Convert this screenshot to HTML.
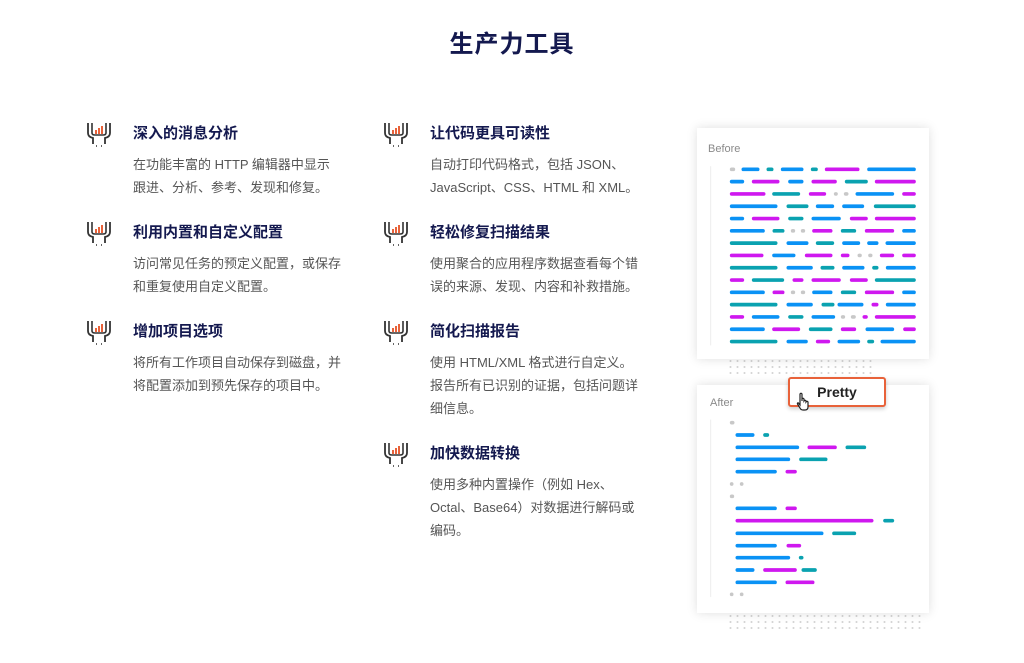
<!DOCTYPE html>
<html><head><meta charset="utf-8"><style>
*{margin:0;padding:0;box-sizing:border-box}
body{width:1024px;height:663px;background:#fff;position:relative;overflow:hidden;font-family:"Liberation Sans","Noto Sans CJK SC",sans-serif}
h1{position:absolute;top:24px;left:0;width:1024px;text-align:center;font-size:24px;font-weight:bold;color:#14194f;letter-spacing:1px}
.it{position:absolute;width:240px}
.it h3{font-size:15px;font-weight:bold;color:#14194f;line-height:20px;margin-bottom:9px}
.it p{font-size:13px;color:#555;line-height:23px}
.ic{position:absolute;width:28px;height:28px}
.card{position:absolute;background:#fff;box-shadow:0 0 10px rgba(0,0,0,.13)}
.lbl{position:absolute;font-size:11px;color:#8a8a8a}
.dots{position:absolute;background-image:radial-gradient(circle,#d6d6d6 0.8px,transparent 1.2px);background-size:7px 6px}
.btn{position:absolute;left:788px;top:377px;width:98px;height:30px;border:2px solid #e8623a;border-radius:3px;background:#fff;font-weight:bold;font-size:14px;color:#222;text-align:center;line-height:26px;box-shadow:0 2px 4px rgba(0,0,0,.2)}
</style></head><body>
<h1>生产力工具</h1>

<svg width="0" height="0" style="position:absolute"><defs>
<g id="icon"><path d="M3 3 L3 13 Q3 17 8 18 L8 24 M25 3 L25 13 Q25 17 20 18 L20 24" fill="none" stroke="#333" stroke-width="1.8"/>
<path d="M7 3 L7 13 Q7 15 10 15 L18 15 Q21 15 21 13 L21 3" fill="none" stroke="#333" stroke-width="1.6"/>
<rect x="10" y="10" width="2" height="4" fill="#e8623a"/><rect x="13" y="8" width="2" height="6" fill="#e8623a"/><rect x="16" y="6" width="2" height="8" fill="#e8623a"/>
<path d="M11 26h1M16 26h1" stroke="#333" stroke-width="1.6"/></g></defs></svg>

<svg class="ic" style="left:85px;top:120px" viewBox="0 0 28 28"><use href="#icon"/></svg>
<svg class="ic" style="left:85px;top:219px" viewBox="0 0 28 28"><use href="#icon"/></svg>
<svg class="ic" style="left:85px;top:318px" viewBox="0 0 28 28"><use href="#icon"/></svg>
<svg class="ic" style="left:382px;top:120px" viewBox="0 0 28 28"><use href="#icon"/></svg>
<svg class="ic" style="left:382px;top:219px" viewBox="0 0 28 28"><use href="#icon"/></svg>
<svg class="ic" style="left:382px;top:318px" viewBox="0 0 28 28"><use href="#icon"/></svg>
<svg class="ic" style="left:382px;top:440px" viewBox="0 0 28 28"><use href="#icon"/></svg>

<div class="it" style="left:133px;top:124px"><h3>深入的消息分析</h3><p>在功能丰富的 HTTP 编辑器中显示<br>跟进、分析、参考、发现和修复。</p></div>
<div class="it" style="left:133px;top:223px"><h3>利用内置和自定义配置</h3><p>访问常见任务的预定义配置，或保存<br>和重复使用自定义配置。</p></div>
<div class="it" style="left:133px;top:322px"><h3>增加项目选项</h3><p>将所有工作项目自动保存到磁盘，并<br>将配置添加到预先保存的项目中。</p></div>
<div class="it" style="left:430px;top:124px"><h3>让代码更具可读性</h3><p>自动打印代码格式，包括 JSON、<br>JavaScript、CSS、HTML 和 XML。</p></div>
<div class="it" style="left:430px;top:223px"><h3>轻松修复扫描结果</h3><p>使用聚合的应用程序数据查看每个错<br>误的来源、发现、内容和补救措施。</p></div>
<div class="it" style="left:430px;top:322px"><h3>简化扫描报告</h3><p>使用 HTML/XML 格式进行自定义。<br>报告所有已识别的证据，包括问题详<br>细信息。</p></div>
<div class="it" style="left:430px;top:444px"><h3>加快数据转换</h3><p>使用多种内置操作（例如 Hex、<br>Octal、Base64）对数据进行解码或<br>编码。</p></div>

<div class="dots" style="left:727px;top:358px;width:145px;height:16px"></div>
<div class="dots" style="left:727px;top:613px;width:195px;height:20px"></div>
<div class="card" style="left:697px;top:128px;width:232px;height:231px"></div>
<div class="card" style="left:697px;top:385px;width:232px;height:228px"></div>
<div class="lbl" style="left:708px;top:143px">Before</div>
<div class="lbl" style="left:710px;top:397px">After</div>

<svg style="position:absolute;left:690px;top:120px" width="250" height="520" viewBox="0 0 750 1560" fill="none" stroke-linecap="round" stroke-width="11" id="bars">
<line x1="62" y1="140" x2="62" y2="675" stroke="#eee" stroke-width="3"/>
<line x1="62" y1="900" x2="62" y2="1430" stroke="#eee" stroke-width="3"/>
</svg>
<div class="btn">Pretty</div>
<svg style="position:absolute;left:796px;top:392px" width="16" height="20" viewBox="0 0 16 20"><path d="M4 2 Q5 0.5 6 2 L6 9 L6 7 Q7 5.5 8 7 L8 9 Q9 7.5 10 9 L10 10 Q11 8.5 12 10 L12 15 Q12 18 9 18 L7 18 Q5 18 4 16 L1.5 12 Q1 10.5 2.5 11 L4 13 Z" fill="#fff" stroke="#222" stroke-width="1.2"/></svg>
<script>
var B='#0a92f5',T='#0aa2b0',M='#cf18ef',G='#c8c8c8';
var before=[
[[G,120,135],[B,155,208],[T,230,250],[B,273,340],[T,363,383],[M,405,508],[B,532,677]],
[[B,120,162],[M,186,268],[B,295,340],[M,365,440],[T,465,533],[M,555,677]],
[[M,120,226],[T,247,330],[M,357,408],[G,432,443],[G,462,475],[B,497,612],[M,637,677]],
[[B,120,262],[T,290,355],[B,378,432],[B,457,522],[T,552,677]],
[[B,120,162],[M,186,268],[T,295,340],[B,365,452],[M,480,533],[M,555,677]],
[[B,120,224],[T,248,283],[G,303,315],[G,333,345],[M,367,427],[T,453,498],[M,525,612],[B,637,677]],
[[T,120,262],[B,290,355],[T,378,432],[B,457,510],[B,532,565],[B,587,677]],
[[M,120,220],[B,247,316],[M,345,427],[M,453,478],[G,503,515],[G,535,547],[M,570,612],[M,637,677]],
[[T,120,262],[B,290,368],[T,392,433],[B,457,523],[T,547,565],[B,588,677]],
[[M,120,162],[T,186,282],[M,308,340],[M,365,452],[M,480,533],[T,555,677]],
[[B,120,224],[M,248,283],[G,303,315],[G,333,345],[B,367,427],[T,453,498],[M,525,612],[B,637,677]],
[[T,120,262],[B,290,368],[T,395,433],[B,443,520],[M,545,565],[B,588,677]],
[[M,120,162],[B,186,268],[T,295,340],[B,365,435],[G,453,465],[G,483,497],[M,518,533],[M,555,677]],
[[B,120,224],[M,247,330],[T,357,427],[M,453,498],[B,527,612],[M,640,677]],
[[T,120,262],[B,290,353],[M,378,420],[B,443,510],[T,532,552],[B,572,677]]];
var after=[[158,[[G,120,133]]],[195,[[B,137,193],[T,220,237]]],[232,[[B,137,327],[M,353,440],[T,467,528]]],
[268,[[B,137,300],[T,328,412]]],[305,[[B,137,260],[M,287,320]]],[342,[[G,120,130],[G,150,160]]],[379,[[G,120,132]]],
[415,[[B,137,260],[M,287,320]]],[452,[[M,137,550],[T,580,612]]],[490,[[B,137,400],[T,427,498]]],
[527,[[B,137,260],[M,290,333]]],[563,[[B,137,300],[T,327,340]]],[600,[[B,137,193],[M,220,320],[T,335,380]]],
[637,[[B,137,260],[M,287,373]]],[673,[[G,120,130],[G,150,160]]]];
var s='',svg=document.getElementById('bars');
function L(c,a,b,y){s+='<line x1="'+(a+5)+'" x2="'+(b-5)+'" y1="'+y+'" y2="'+y+'" stroke="'+c+'"/>';}
before.forEach(function(r,i){var y=148+i*36.9;r.forEach(function(q){L(q[0],q[1],q[2],y)})});
after.forEach(function(r){r[1].forEach(function(q){L(q[0],q[1],q[2],r[0]+750)})});
svg.innerHTML+=s;
</script>
</body></html>
